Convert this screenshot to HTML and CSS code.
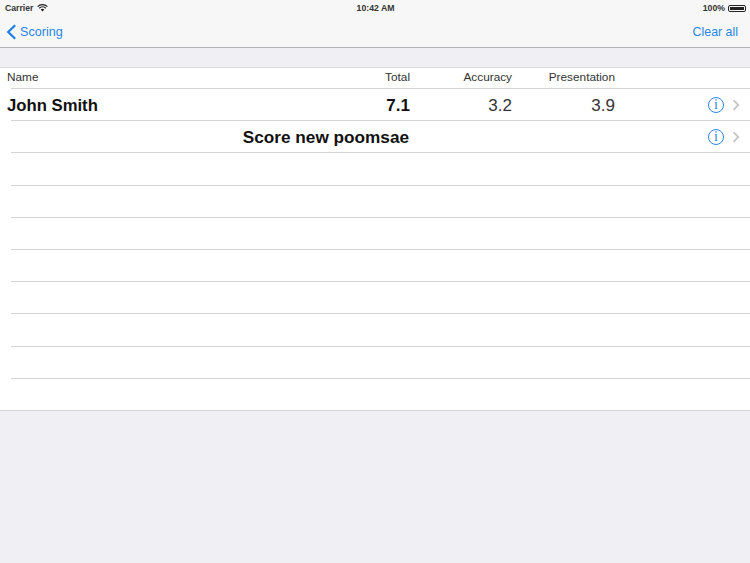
FILE: index.html
```html
<!DOCTYPE html>
<html lang="en">
<head>
    <meta charset="UTF-8">
    <title>Scoring</title>
    <link rel="stylesheet" href="styles.css">
</head>
<body>
    <!-- Status + nav bar -->
    <div class="topbar">
        <div class="status">
            <div class="status-left">
                <span>Carrier</span>
                <svg class="wifi" width="11" height="8" viewBox="0 0 11 8">
                    <path d="M0.6 2.6 A7 7 0 0 1 10.4 2.6 M2.2 4.2 A4.7 4.7 0 0 1 8.8 4.2" fill="none" stroke="#222" stroke-width="1.2"/>
                    <path d="M3.7 5.6 A2.6 2.6 0 0 1 7.3 5.6 L5.5 7.6 Z" fill="#222"/>
                </svg>
            </div>
            <div class="status-time">10:42 AM</div>
            <div class="status-right">
                <span>100%</span>
                <span class="battery"><span class="battery-fill"></span></span>
            </div>
        </div>
        <div class="nav">
            <div class="nav-back">
                <svg width="11" height="16" viewBox="0 0 11 16">
                    <path d="M9.2 1.2 L2.2 8 L9.2 14.8" fill="none" stroke="#1a7fe8" stroke-width="2.2"/>
                </svg>
                <span>Scoring</span>
            </div>
            <div class="nav-action">Clear all</div>
        </div>
    </div>

    <div class="band"></div>

    <!-- Score table -->
    <div class="table">
        <div class="row header">
            <div class="cell-name">Name</div>
            <div class="cell-total">Total</div>
            <div class="cell-acc">Accuracy</div>
            <div class="cell-pres">Presentation</div>
        </div>
        <div class="row score">
            <div class="cell-name"><b>John Smith</b></div>
            <div class="cell-total"><b>7.1</b></div>
            <div class="cell-acc">3.2</div>
            <div class="cell-pres">3.9</div>
            <div class="accessory">
                <span class="info">i</span>
                <svg class="chevron" width="8" height="12" viewBox="0 0 8 12">
                    <path d="M1.5 1.2 L6.3 6 L1.5 10.8" fill="none" stroke="#c7c7cc" stroke-width="1.8"/>
                </svg>
            </div>
        </div>
        <div class="row score">
            <div class="cell-new"><b>Score new poomsae</b></div>
            <div class="accessory">
                <span class="info">i</span>
                <svg class="chevron" width="8" height="12" viewBox="0 0 8 12">
                    <path d="M1.5 1.2 L6.3 6 L1.5 10.8" fill="none" stroke="#c7c7cc" stroke-width="1.8"/>
                </svg>
            </div>
        </div>
        <div class="row empty"></div>
        <div class="row empty"></div>
        <div class="row empty"></div>
        <div class="row empty"></div>
        <div class="row empty"></div>
        <div class="row empty"></div>
        <div class="row empty"></div>
        <div class="row empty last"></div>
    </div>
</body>
</html>
```

FILE: styles.css
```css
* {
    margin: 0;
    padding: 0;
    box-sizing: border-box;
    font-family: "Liberation Sans", Arial, sans-serif;
}

body {
    width: 750px;
    height: 563px;
    overflow: hidden;
    background-color: #efeff4;
    color: #111;
}

.topbar {
    height: 48px;
    background-color: #f7f7f8;
    border-bottom: 1px solid #b4b4b8;
}

.status {
    height: 16px;
    padding: 0 4px 0 5px;
    display: grid;
    grid-template-columns: 1fr auto 1fr;
    align-items: center;
    font-size: 8.7px;
    font-weight: bold;
    color: #333;
}

.status-left {
    display: flex;
    align-items: center;
    gap: 3px;
}

.status-right {
    display: flex;
    align-items: center;
    justify-content: flex-end;
    gap: 3px;
}

.battery {
    width: 18px;
    height: 7px;
    padding: 1px;
    border: 1px solid #222;
    border-radius: 2px;
}

.battery-fill {
    display: block;
    height: 100%;
    background-color: #222;
}

.nav {
    height: 31px;
    padding: 0 12px 0 6px;
    display: flex;
    justify-content: space-between;
    align-items: center;
    font-size: 12.6px;
    color: #2a86e8;
}

.nav-action {
    font-size: 12.4px;
}

.nav-back {
    display: flex;
    align-items: center;
    gap: 3px;
}

.band {
    height: 19px;
    background-color: #efeff4;
}

.table {
    background-color: #fff;
    border-top: 1px solid #dcdce0;
    border-bottom: 1px solid #d4d4d8;
}

.row {
    position: relative;
    display: grid;
    grid-template-columns: 293px 110px 102px 103px 1fr;
    padding-left: 7px;
    align-items: center;
    height: 32.2px;
}

/* inset separator under each row */
.row::after {
    content: "";
    position: absolute;
    left: 11px;
    right: 0;
    bottom: 0;
    height: 1px;
    background-color: #d4d4d6;
}

.row.last {
    height: 31px;
}

.row.last::after {
    display: none;
}

.header {
    height: 21px;
    padding-bottom: 3px;
    font-size: 11.8px;
    color: #333;
}

.score {
    padding-top: 2px;
    font-size: 17px;
    color: #333;
}

.score b {
    color: #111;
}

.score .cell-name {
    font-size: 16.7px;
}

.cell-total, .cell-acc, .cell-pres {
    text-align: right;
}

.cell-new {
    grid-column: 1 / 3;
    padding-right: 1px;
    margin-top: -1px;
    text-align: right;
    font-size: 17.2px;
}

.accessory {
    grid-column: 5;
    display: flex;
    align-items: center;
    justify-content: flex-end;
    gap: 8px;
    padding-right: 10px;
    margin-top: -2px;
}

.info {
    width: 16px;
    height: 16px;
    border: 1.3px solid #2a86e8;
    border-radius: 50%;
    color: #2a86e8;
    font-family: "Liberation Serif", serif;
    font-size: 14px;
    line-height: 14px;
    text-align: center;
}
```
